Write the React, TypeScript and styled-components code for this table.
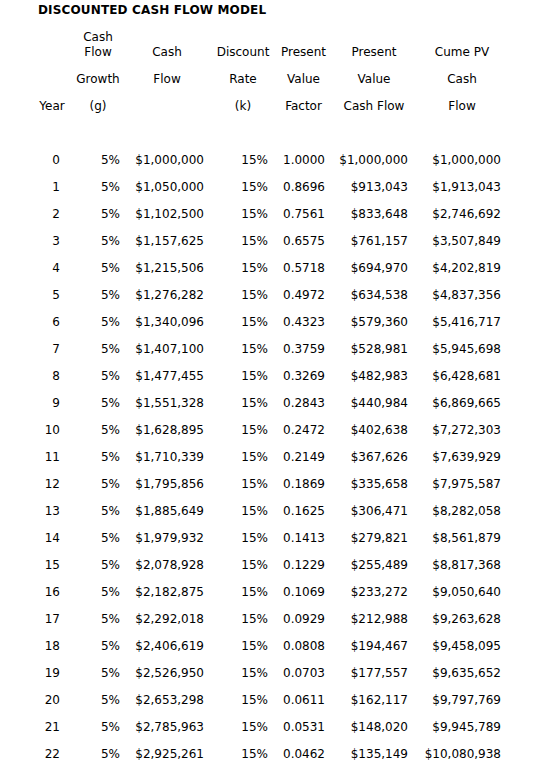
import styled, { createGlobalStyle } from "styled-components";

const GlobalStyle = createGlobalStyle`
  body {
    margin: 0;
    background: #fff;
    font-family: "DejaVu Sans", Verdana, sans-serif;
    color: #000;
  }
`;

const Page = styled.div`
  padding: 3px 0 0 34px;
  font-size: 12px;
  line-height: 15px;
`;

const Title = styled.h1`
  margin: 0 0 6px 4px;
  font-size: 12px;
  line-height: 15px;
  font-weight: bold;
  letter-spacing: 0.15px;
`;

// old-school table: 7 fixed columns
const Grid = styled.div`
  display: grid;
  grid-template-columns: 36px 56px 82px 70px 51px 90px 86px;
`;

const HeadCell = styled.div`
  display: flex;
  align-items: flex-end;
  justify-content: center;
  text-align: center;
  padding: 6px 0;
  min-height: 15px;
  white-space: nowrap;
`;

const DataCell = styled.div<{ $pad: number }>`
  text-align: right;
  padding: 6px ${(p) => p.$pad}px 6px 0;
  white-space: nowrap;
`;

const Spacer = styled.div`
  grid-column: 1 / -1;
  height: 27px;
`;

const pads = [10, 6, 4, 10, 4, 11, 4];

const headRows: string[][] = [
  ["", "Cash\nFlow", "Cash", "Discount", "Present", "Present", "Cume PV"],
  ["", "Growth", "Flow", "Rate", "Value", "Value", "Cash"],
  ["Year", "(g)", "", "(k)", "Factor", "Cash Flow", "Flow"],
];

const rows: [string, string, string, string][] = [
  ["$1,000,000", "1.0000", "$1,000,000", "$1,000,000"],
  ["$1,050,000", "0.8696", "$913,043", "$1,913,043"],
  ["$1,102,500", "0.7561", "$833,648", "$2,746,692"],
  ["$1,157,625", "0.6575", "$761,157", "$3,507,849"],
  ["$1,215,506", "0.5718", "$694,970", "$4,202,819"],
  ["$1,276,282", "0.4972", "$634,538", "$4,837,356"],
  ["$1,340,096", "0.4323", "$579,360", "$5,416,717"],
  ["$1,407,100", "0.3759", "$528,981", "$5,945,698"],
  ["$1,477,455", "0.3269", "$482,983", "$6,428,681"],
  ["$1,551,328", "0.2843", "$440,984", "$6,869,665"],
  ["$1,628,895", "0.2472", "$402,638", "$7,272,303"],
  ["$1,710,339", "0.2149", "$367,626", "$7,639,929"],
  ["$1,795,856", "0.1869", "$335,658", "$7,975,587"],
  ["$1,885,649", "0.1625", "$306,471", "$8,282,058"],
  ["$1,979,932", "0.1413", "$279,821", "$8,561,879"],
  ["$2,078,928", "0.1229", "$255,489", "$8,817,368"],
  ["$2,182,875", "0.1069", "$233,272", "$9,050,640"],
  ["$2,292,018", "0.0929", "$212,988", "$9,263,628"],
  ["$2,406,619", "0.0808", "$194,467", "$9,458,095"],
  ["$2,526,950", "0.0703", "$177,557", "$9,635,652"],
  ["$2,653,298", "0.0611", "$162,117", "$9,797,769"],
  ["$2,785,963", "0.0531", "$148,020", "$9,945,789"],
  ["$2,925,261", "0.0462", "$135,149", "$10,080,938"],
];

const App = () => {
  return (
    <Page>
      <GlobalStyle />
      <Title>DISCOUNTED CASH FLOW MODEL</Title>
      <Grid>
        {headRows.map((r, i) =>
          r.map((h, j) => (
            <HeadCell key={`h${i}-${j}`}>
              <span>
                {h.split("\n").map((line, k) => (
                  <div key={k}>{line}</div>
                ))}
              </span>
            </HeadCell>
          ))
        )}
        <Spacer />
        {rows.map((r, year) =>
          [String(year), "5%", r[0], "15%", r[1], r[2], r[3]].map((v, j) => (
            <DataCell key={`d${year}-${j}`} $pad={pads[j]}>
              {v}
            </DataCell>
          ))
        )}
      </Grid>
    </Page>
  );
};

export default App;
